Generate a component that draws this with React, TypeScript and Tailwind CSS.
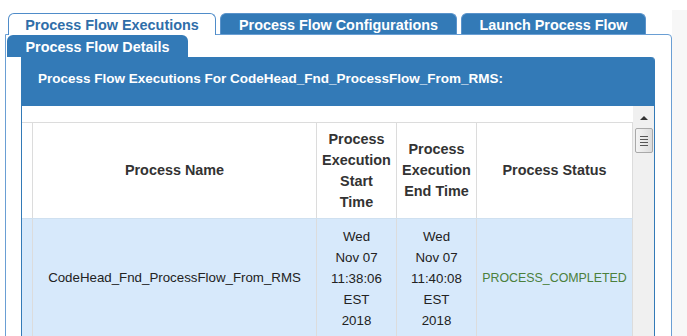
import * as React from 'react';

const headerCols = [
  { w: 'w-[284px]', label: ['Process Name'] },
  { w: 'w-[80px]', label: ['Process', 'Execution', 'Start', 'Time'] },
  { w: 'w-[80px]', label: ['Process', 'Execution', 'End Time'] },
  { w: 'w-[156px]', label: ['Process Status'] },
];

function Tab({ label, active, width }: { label: string; active?: boolean; width: string }) {
  if (active) {
    return (
      <div
        className={`${width} h-[22px] -mb-px pt-[3px] relative z-10 bg-white border border-b-0 border-[#4f8cc9] rounded-t-[6px] flex items-center justify-center text-[14.4px] font-bold text-[#2f6ea9]`}
      >
        {label}
      </div>
    );
  }
  return (
    <div
      className={`${width} h-[21px] pt-[3px] bg-[#337ab7] border border-b-0 border-[#5a93cb] rounded-t-[6px] flex items-center justify-center text-[14.4px] font-bold text-white`}
    >
      {label}
    </div>
  );
}

function Scrollbar() {
  return (
    <div className="w-[21px] bg-[#f0f0f0] flex flex-col items-center">
      <div className="h-[22px] flex items-center justify-center pt-[2px]">
        <div className="w-0 h-0 border-x-[4px] border-x-transparent border-b-[4px] border-b-[#333]" />
      </div>
      <div className="w-[18px] h-[25px] rounded-[2px] border border-[#a9a9a9] bg-gradient-to-r from-[#f4f4f4] to-[#dcdcdc] flex flex-col items-center justify-center gap-[2px]">
        <div className="w-[8px] h-px bg-[#555]" />
        <div className="w-[8px] h-px bg-[#555]" />
        <div className="w-[8px] h-px bg-[#555]" />
        <div className="w-[8px] h-px bg-[#555]" />
      </div>
    </div>
  );
}

export default function App() {
  return (
    <div className="w-[687px] h-[336px] overflow-hidden bg-white font-['Liberation_Sans',Arial,sans-serif] relative">
      <div className="absolute right-0 top-[10px] w-[15px] h-[326px] bg-[#f7f7f7]" />
      <div className="pt-[13px] pl-[8px] flex items-end gap-[4px] relative z-10">
        <Tab label="Process Flow Executions" active width="w-[208px]" />
        <Tab label="Process Flow Configurations" width="w-[237px]" />
        <Tab label="Launch Process Flow" width="w-[185px]" />
      </div>

      <div className="ml-[5px] w-[667px] h-[320px] border border-[#6a9fd4] rounded-tr-[4px] bg-white relative">
        <div className="ml-[1px] w-[181px] h-[22px] pt-[3px] bg-[#337ab7] rounded-t-[6px] flex items-center justify-center text-[14.4px] font-bold text-white">
          Process Flow Details
        </div>

        <div className="ml-[15px] w-[634px] h-[300px] border-x border-[#337ab7] rounded-tr-[4px]">
          <div className="h-[49px] bg-[#337ab7] rounded-tr-[3px] pl-[16px] pt-[13px] text-[13.5px] font-bold text-white leading-[18px]">
            Process Flow Executions For CodeHead_Fnd_ProcessFlow_From_RMS:
          </div>

          <div className="flex">
            <div className="w-[611px] pt-[16px] text-[#333]">
              <div className="flex h-[96px] border-t border-[#dcdcdc] text-[14.4px] font-bold leading-[21px]">
                <div className="w-[11px] border-r border-[#dcdcdc]" />
                {headerCols.map((c, i) => (
                  <div
                    key={i}
                    className={`${c.w} border-r border-[#dcdcdc] flex flex-col items-center justify-center text-center`}
                  >
                    {c.label.map((l) => (
                      <span key={l}>{l}</span>
                    ))}
                  </div>
                ))}
              </div>

              <div className="flex h-[130px] bg-[#d7e9fb] border-t border-[#cfe0f0] text-[13.3px] leading-[21px] text-[#222]">
                <div className="w-[11px] border-r border-[#dcdcdc]" />
                <div className="w-[284px] border-r border-[#dcdcdc] flex items-start justify-center pt-[48px]">
                  CodeHead_Fnd_ProcessFlow_From_RMS
                </div>
                <div className="w-[80px] border-r border-[#dcdcdc] flex flex-col items-center pt-[7px]">
                  <span>Wed</span>
                  <span>Nov 07</span>
                  <span>11:38:06</span>
                  <span>EST</span>
                  <span>2018</span>
                </div>
                <div className="w-[80px] border-r border-[#dcdcdc] flex flex-col items-center pt-[7px]">
                  <span>Wed</span>
                  <span>Nov 07</span>
                  <span>11:40:08</span>
                  <span>EST</span>
                  <span>2018</span>
                </div>
                <div className="w-[156px] border-r border-[#dcdcdc] flex items-start justify-center pt-[49px] text-[12.4px] text-[#4b803c]">
                  PROCESS_COMPLETED
                </div>
              </div>
            </div>
            <Scrollbar />
          </div>
        </div>
      </div>
    </div>
  );
}
